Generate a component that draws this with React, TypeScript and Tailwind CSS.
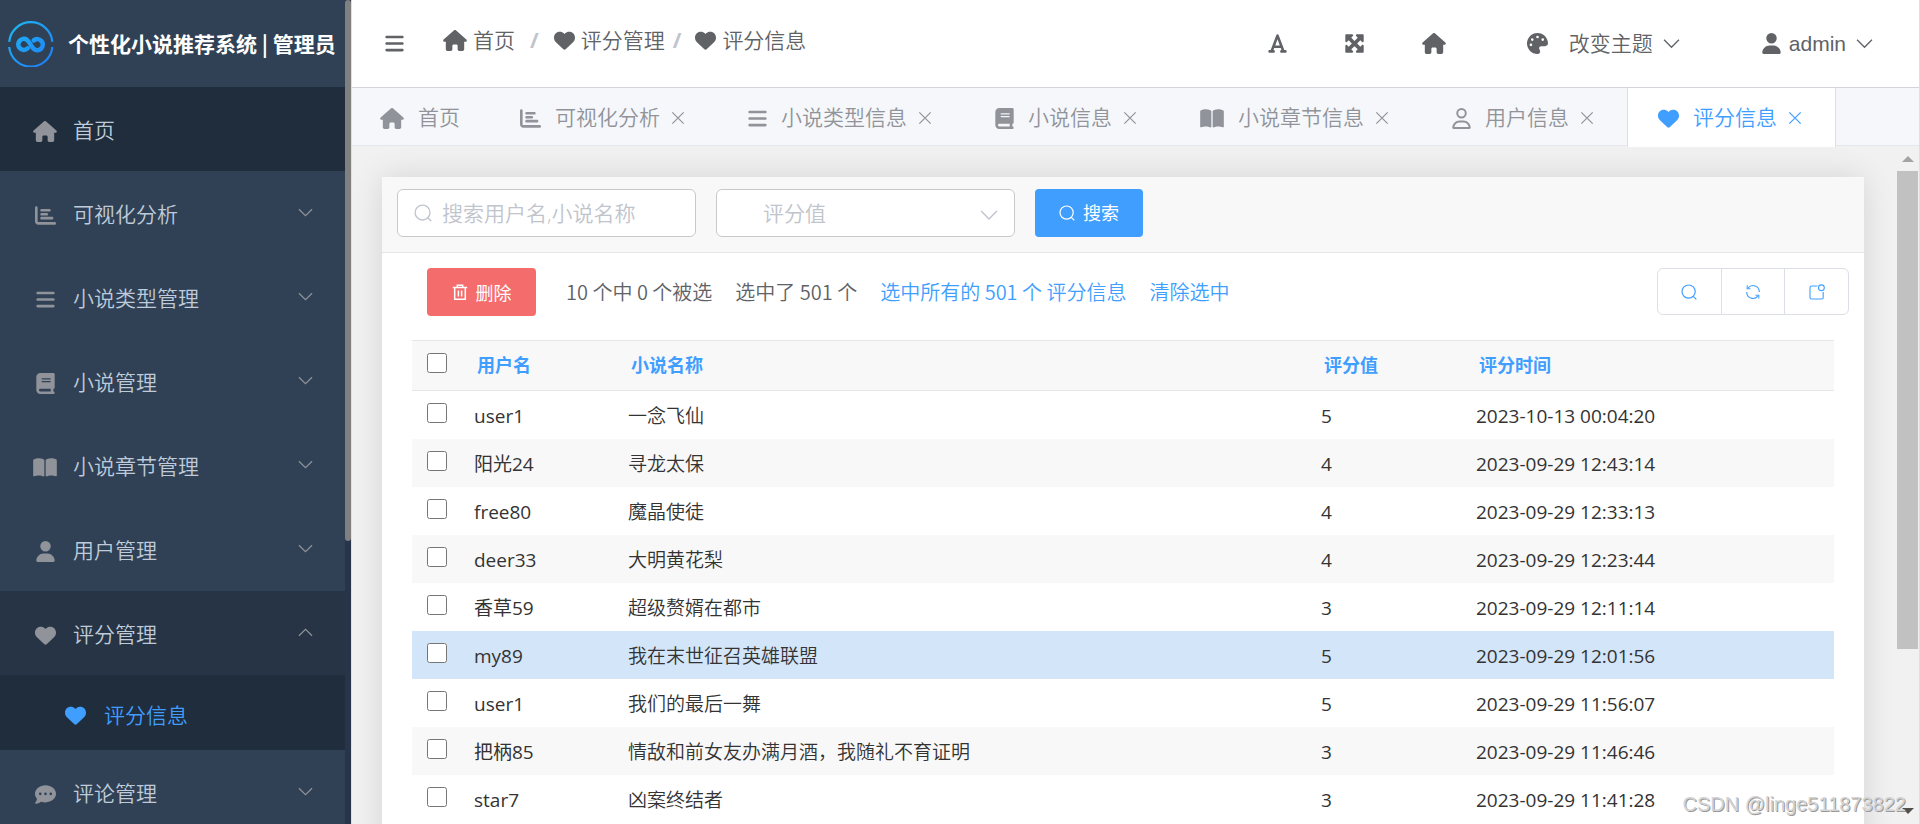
import type { ReactNode } from "react";
import type { IconType } from "react-icons";
import {
  FaBars,
  FaBook,
  FaBookOpen,
  FaChartBar,
  FaCommentDots,
  FaFont,
  FaHeart,
  FaHouse,
  FaMaximize,
  FaPalette,
  FaRegUser,
  FaUser,
} from "react-icons/fa6";

const FONT = "font-['Open_Sans','Noto_Sans_CJK_SC',sans-serif]";
const CJK_FONT = "font-['Noto_Sans_CJK_SC',sans-serif]";

const NARROW = "h-[21px] w-[19px]";
const SQUARE = "h-[21px] w-[21px]";
const WIDE = "h-[21px] w-6";

type StrokeIconProps = { className?: string; children: ReactNode };

function StrokeIcon({ className = "", children }: StrokeIconProps) {
  return (
    <svg viewBox="0 0 16 16" fill="none" stroke="currentColor" aria-hidden="true" className={className}>
      {children}
    </svg>
  );
}

const Search = ({ className }: { className?: string }) => (
  <StrokeIcon className={className}>
    <circle cx="7.6" cy="7.6" r="6.6" strokeWidth="1.2" />
    <path strokeWidth="1.2" d="M12.3 12.3l3 3" />
  </StrokeIcon>
);

const ChevronDown = ({ className }: { className?: string }) => (
  <StrokeIcon className={className}>
    <path strokeWidth="1.25" d="M1 4.5l7 7 7-7" />
  </StrokeIcon>
);

const ChevronUp = ({ className }: { className?: string }) => (
  <StrokeIcon className={className}>
    <path strokeWidth="1.25" d="M1 11.5l7-7 7 7" />
  </StrokeIcon>
);

const Close = ({ className }: { className?: string }) => (
  <StrokeIcon className={className}>
    <path strokeWidth="1.4" d="M1.5 1.5l13 13M14.5 1.5l-13 13" />
  </StrokeIcon>
);

const Refresh = ({ className }: { className?: string }) => (
  <StrokeIcon className={className}>
    <path strokeWidth="1.1" d="M3.2 3.8A6.3 6.3 0 0 1 14.3 8M12.8 12.2A6.3 6.3 0 0 1 1.7 8" />
    <path strokeWidth="1.1" d="M2.2 1.6v3.2h3.3M13.8 14.6v-3.3h-3.3" />
  </StrokeIcon>
);

const Export = ({ className }: { className?: string }) => (
  <StrokeIcon className={className}>
    <path strokeWidth="1.1" d="M8.5 2H2.6C1.7 2 1 2.7 1 3.6v9.8c0 .9.7 1.6 1.6 1.6h10c.9 0 1.6-.7 1.6-1.6V8" />
    <circle strokeWidth="1.1" cx="12.4" cy="3.8" r="2.9" />
  </StrokeIcon>
);

const Trash = ({ className }: { className?: string }) => (
  <StrokeIcon className={className}>
    <path strokeWidth="1.5" d="M.8 3.6h14.4M2.7 3.6v11.6h10.6V3.6M5.3 3.4V1.2h5.4v2.2M6.4 6.4v6M9.6 6.4v6" />
  </StrokeIcon>
);

function Logo() {
  return (
    <svg viewBox="0 0 46 46" fill="none" aria-hidden="true" className="size-[46px] shrink-0">
      <defs>
        <linearGradient id="logo" x1="0" y1="0" x2="46" y2="46" gradientUnits="userSpaceOnUse">
          <stop offset="0" stopColor="#1cbdf5" />
          <stop offset="1" stopColor="#2078f6" />
        </linearGradient>
      </defs>
      <path stroke="url(#logo)" strokeWidth="2.2" d="M1.2 20.8a21.7 21.7 0 0 1 43.2 0M1.2 26a21.7 21.7 0 0 0 43.2 0" />
      <path
        stroke="url(#logo)"
        strokeWidth="4.6"
        strokeLinecap="round"
        d="M19.6 27.4A5.5 5.5 0 1 1 19 18.9C21.800 20.600 23 25.900 25.900 28A5.500 5.500 0 1 0 25.800 19.400"
      />
    </svg>
  );
}

type MenuItem = { label: string; icon: IconType; size: string; state?: "home" | "open" };

const menu: MenuItem[] = [
  { label: "首页", icon: FaHouse, size: WIDE, state: "home" },
  { label: "可视化分析", icon: FaChartBar, size: SQUARE },
  { label: "小说类型管理", icon: FaBars, size: NARROW },
  { label: "小说管理", icon: FaBook, size: NARROW },
  { label: "小说章节管理", icon: FaBookOpen, size: WIDE },
  { label: "用户管理", icon: FaUser, size: NARROW },
  { label: "评分管理", icon: FaHeart, size: SQUARE, state: "open" },
  { label: "评论管理", icon: FaCommentDots, size: SQUARE },
];

const itemBackground = { home: "bg-[#1f2d3d]", open: "bg-[#263445]", idle: "bg-[#304156]" };

function Sidebar() {
  return (
    <aside className="flex w-[351px] shrink-0 bg-[#28344a]">
      <div className="flex min-w-0 flex-1 flex-col bg-[#304156]">
        <div className="flex h-[87px] shrink-0 items-center gap-[14px] pl-2">
          <Logo />
          <h1 className={`text-[21px] font-bold whitespace-nowrap text-white ${CJK_FONT}`}>
            个性化小说推荐系统 | 管理员
          </h1>
        </div>
        <nav>
          <ul>
            {menu.map(({ label, icon: Icon, size, state }) => (
              <li key={label}>
                <a
                  href="#"
                  className={`flex h-[84px] items-center pt-1 pr-8 pl-[33px] text-[21px] text-[#bfcbd9] ${itemBackground[state ?? "idle"]}`}
                >
                  <span className="flex w-6 justify-center text-[#909399]">
                    <Icon className={size} />
                  </span>
                  <span className="ml-4 flex-1">{label}</span>
                  {state === "open" && <ChevronUp className="mb-[6px] size-[15px] text-[#909399]" />}
                  {!state && <ChevronDown className="mb-[6px] size-[15px] text-[#909399]" />}
                </a>
                {state === "open" && (
                  <a href="#" className="flex h-[75px] items-center bg-[#1f2d3d] pt-[6px] pl-[65px] text-[21px] text-[#409eff]">
                    <FaHeart className={SQUARE} />
                    <span className="ml-[18px]">评分信息</span>
                  </a>
                )}
              </li>
            ))}
          </ul>
        </nav>
      </div>
      <div className="w-[6px] shrink-0">
        <div className="h-[65.6%] rounded-full bg-[#808080]" />
      </div>
    </aside>
  );
}

function Header() {
  return (
    <header className="flex h-[87px] shrink-0 items-center justify-between bg-white pr-[46px] pl-[33px] text-[21px] text-[#606266]">
      <div className="flex items-center">
        <button type="button" aria-label="菜单">
          <FaBars className={NARROW} />
        </button>
        <nav aria-label="面包屑" className="mb-[6px] ml-[39px] flex items-center">
          <a href="#" className="flex items-center gap-[6px]">
            <FaHouse className={WIDE} />
            首页
          </a>
          <span className="mx-[15px] font-bold text-[#c0c4cc]">/</span>
          <a href="#" className="flex items-center gap-[6px]">
            <FaHeart className={SQUARE} />
            评分管理
          </a>
          <span className="mr-[14px] ml-2 font-bold text-[#c0c4cc]">/</span>
          <a href="#" className="flex items-center gap-[6px]">
            <FaHeart className={SQUARE} />
            评分信息
          </a>
        </nav>
      </div>
      <div className="flex items-center">
        <button type="button" aria-label="字体大小">
          <FaFont className={NARROW} />
        </button>
        <button type="button" aria-label="全屏" className="ml-[57px]">
          <FaMaximize className={SQUARE} />
        </button>
        <a href="#" aria-label="首页" className="ml-[57px]">
          <FaHouse className={WIDE} />
        </a>
        <button type="button" className="ml-[81px] flex items-center">
          <FaPalette className={SQUARE} />
          <span className="ml-[21px]">改变主题</span>
          <ChevronDown className="ml-[10px] size-[17px]" />
        </button>
        <button type="button" className="ml-[82px] flex items-center font-['Liberation_Sans',sans-serif]">
          <FaUser className={NARROW} />
          <span className="ml-2">admin</span>
          <ChevronDown className="ml-[10px] size-[17px]" />
        </button>
      </div>
    </header>
  );
}

const tabs: { label: string; icon: IconType; size: string }[] = [
  { label: "可视化分析", icon: FaChartBar, size: SQUARE },
  { label: "小说类型信息", icon: FaBars, size: NARROW },
  { label: "小说信息", icon: FaBook, size: NARROW },
  { label: "小说章节信息", icon: FaBookOpen, size: WIDE },
  { label: "用户信息", icon: FaRegUser, size: NARROW },
];

function Tabs() {
  return (
    <div className="relative z-10 flex h-[59px] shrink-0 border-y border-t-[#d3d5da] border-b-[#e4e7ed] bg-[#f5f7fa] text-[21px] text-[#909399]">
      <a href="#" className="flex items-center pt-[3px] pr-[30px] pl-7">
        <FaHouse className={WIDE} />
        <span className="ml-[14px]">首页</span>
      </a>
      {tabs.map(({ label, icon: Icon, size }) => (
        <div key={label} className="flex items-center px-[30px] pt-[3px]">
          <Icon className={size} />
          <a href="#" className="ml-[14px]">
            {label}
          </a>
          <button type="button" aria-label={`关闭 ${label}`} className="ml-2 flex w-5 justify-center">
            <Close className="size-[14px]" />
          </button>
        </div>
      ))}
      <div className="-mb-[2px] flex items-center border-x border-[#dcdfe6] bg-white px-[30px] pt-px text-[#409eff]">
        <FaHeart className={SQUARE} />
        <a href="#" className="ml-[14px]">
          评分信息
        </a>
        <button type="button" aria-label="关闭 评分信息" className="ml-2 flex w-5 justify-center">
          <Close className="size-[14px]" />
        </button>
      </div>
    </div>
  );
}

function SearchBar() {
  return (
    <form className="flex items-center gap-5 border-b border-[#e6e6e6] bg-[#f8f8f8] px-[15px] pt-3 pb-[15px]">
      <label className="flex h-12 w-[299px] items-center rounded-md border border-[#c8c9cc] bg-white px-4 text-[#c0c4cc]">
        <Search className="size-[18px] shrink-0" />
        <input
          type="text"
          aria-label="搜索"
          placeholder="搜索用户名,小说名称"
          className="ml-[10px] w-full min-w-0 pt-[2px] text-[21px] text-[#606266] outline-none placeholder:text-[#c0c4cc]"
        />
      </label>
      <label className="grid h-12 w-[299px] items-center rounded-md border border-[#c8c9cc] bg-white text-[#c0c4cc]">
        <select
          aria-label="评分值"
          className="col-start-1 row-start-1 h-full w-full appearance-none bg-transparent pt-[2px] pl-[46px] text-[21px] outline-none"
        >
          <option>评分值</option>
        </select>
        <ChevronDown className="pointer-events-none col-start-1 row-start-1 mt-1 mr-4 size-[18px] justify-self-end" />
      </label>
      <button type="button" className="flex h-12 w-[108px] items-center justify-center gap-2 rounded bg-[#409eff] text-[18px] font-normal text-white">
        <Search className="size-4" />
        搜索
      </button>
    </form>
  );
}

function Toolbar() {
  return (
    <div className="flex items-start justify-between pt-[15px] pr-[15px] pl-[45px]">
      <div className={`flex items-center text-[20px] text-[#606266] ${CJK_FONT}`}>
        <button type="button" className="flex h-12 w-[109px] items-center justify-center gap-2 rounded bg-[#f56c6c] text-[18px] font-normal text-white">
          <Trash className="size-4" />
          删除
        </button>
        <span className="ml-[30px]">10 个中 0 个被选</span>
        <span className="ml-[23px]">选中了 501 个</span>
        <a href="#" className="ml-[23px] text-[#409eff]">
          选中所有的 501 个 评分信息
        </a>
        <a href="#" className="ml-[23px] text-[#409eff]">
          清除选中
        </a>
      </div>
      <div className="flex h-[47px] w-48 divide-x divide-[#dcdfe6] rounded-md border border-[#dcdfe6] text-[#409eff]">
        <button type="button" aria-label="搜索" className="flex flex-1 items-center justify-center">
          <Search className="size-4" />
        </button>
        <button type="button" aria-label="刷新" className="flex flex-1 items-center justify-center">
          <Refresh className="size-4" />
        </button>
        <button type="button" aria-label="导出" className="flex flex-1 items-center justify-center">
          <Export className="size-4" />
        </button>
      </div>
    </div>
  );
}

type Rating = { user: string; novel: string; score: number; time: string };

const ratings: Rating[] = [
  { user: "user1", novel: "一念飞仙", score: 5, time: "2023-10-13 00:04:20" },
  { user: "阳光24", novel: "寻龙太保", score: 4, time: "2023-09-29 12:43:14" },
  { user: "free80", novel: "魔晶使徒", score: 4, time: "2023-09-29 12:33:13" },
  { user: "deer33", novel: "大明黄花梨", score: 4, time: "2023-09-29 12:23:44" },
  { user: "香草59", novel: "超级赘婿在都市", score: 3, time: "2023-09-29 12:11:14" },
  { user: "my89", novel: "我在末世征召英雄联盟", score: 5, time: "2023-09-29 12:01:56" },
  { user: "user1", novel: "我们的最后一舞", score: 5, time: "2023-09-29 11:56:07" },
  { user: "把柄85", novel: "情敌和前女友办满月酒，我随礼不育证明", score: 3, time: "2023-09-29 11:46:46" },
  { user: "star7", novel: "凶案终结者", score: 3, time: "2023-09-29 11:41:28" },
];

const HIGHLIGHTED = 5;

function RatingsTable() {
  return (
    <div className="mt-6 px-[30px]">
      <table className="w-full table-fixed text-left text-[19px] text-[#333333]">
        <colgroup>
          <col className="w-[50px]" />
          <col className="w-[154px]" />
          <col />
          <col className="w-[155px]" />
          <col className="w-[370px]" />
        </colgroup>
        <thead>
          <tr className="h-[50px] border-y border-[#e6e6e6] bg-[#f8f8f8] text-[18px] text-[#409eff]">
            <th className="pl-[15px]">
              <input type="checkbox" aria-label="全选" className="mb-[6px] block size-5" />
            </th>
            {["用户名", "小说名称", "评分值", "评分时间"].map((title) => (
              <th key={title} className="pl-[15px] font-bold">
                <a href="#">{title}</a>
              </th>
            ))}
          </tr>
        </thead>
        <tbody>
          {ratings.map((row, i) => (
            <tr
              key={row.time}
              className={`h-12 ${i === HIGHLIGHTED ? "bg-[#d3e5f9]" : i % 2 ? "bg-[#f8f8f8]" : "bg-white"}`}
            >
              <td className="pl-[15px]">
                <input type="checkbox" aria-label={`选择 ${row.novel}`} className="mb-1 block size-5" />
              </td>
              <td className="pt-[3px] pl-3 font-normal">{row.user}</td>
              <td className="pt-[3px] pl-3">{row.novel}</td>
              <td className="pt-[3px] pl-3 font-normal">{row.score}</td>
              <td className="pt-[3px] pl-3 font-normal">{row.time}</td>
            </tr>
          ))}
        </tbody>
      </table>
    </div>
  );
}

function Scrollbar() {
  return (
    <div className="flex w-[22px] shrink-0 flex-col items-center justify-between pt-[10px] pb-[10px]" aria-hidden="true">
      <svg viewBox="0 0 12 6" className="mb-[9px] h-[6px] w-3 shrink-0 fill-[#a3a3a3]">
        <path d="M0 6l6-6 6 6z" />
      </svg>
      <div className="w-full flex-1 pr-px">
        <div className="h-[75%] bg-[#c1c1c1]" />
      </div>
      <svg viewBox="0 0 12 6" className="h-[6px] w-3 shrink-0 fill-[#505050]">
        <path d="M0 0l6 6 6-6z" />
      </svg>
    </div>
  );
}

export default function App() {
  return (
    <div className={`relative flex h-screen overflow-hidden font-[350] ${FONT}`}>
      <Sidebar />
      <div className="flex min-w-0 flex-1 flex-col border-x border-[#dcdfe6] bg-[#f1f1f1]">
        <Header />
        <Tabs />
        <div className="flex min-h-0 flex-1">
          <main className="min-w-0 flex-1 overflow-hidden pt-[31px] pr-[33px] pl-[30px]">
            <section className="min-h-screen bg-white shadow-[0_0_30px_rgba(0,0,0,0.12)]">
              <SearchBar />
              <Toolbar />
              <RatingsTable />
            </section>
          </main>
          <Scrollbar />
        </div>
      </div>
      <p className="pointer-events-none absolute right-[14px] bottom-[5px] font-['Liberation_Sans',sans-serif] text-[20px] font-normal text-[#d4d4d4] [text-shadow:1px_1px_0_#999999]">
        CSDN @linge511873822
      </p>
    </div>
  );
}
